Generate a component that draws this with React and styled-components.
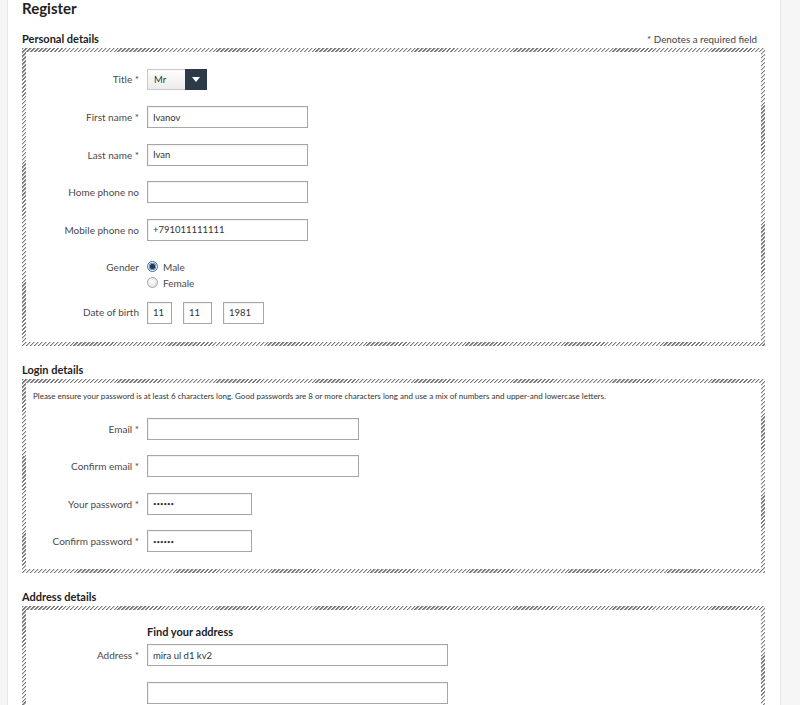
import styled, { createGlobalStyle } from "styled-components";

const GlobalStyle = createGlobalStyle`
  html, body {
    margin: 0;
    padding: 0;
    background: #fff;
    font-family: Lato, "Open Sans", sans-serif;
    color: #444;
    overflow: hidden;
  }
`;

const Page = styled.div`
  display: flex;
  width: 800px;
  height: 705px;
  overflow: hidden;
`;

const Rail = styled.div`
  flex: none;
  width: ${({ width }) => width}px;
  background: #f6f6f6;
  border-${({ side }) => (side === "left" ? "right" : "left")}: 1px solid #e8e8e8;
`;

const Main = styled.main`
  flex: 1;
  padding: 1px 15px 0 14px;
`;

const PageTitle = styled.h1`
  margin: 0;
  font-size: 15px;
  line-height: 15px;
  font-weight: 700;
  color: #222;
`;

const SectionHead = styled.div`
  display: flex;
  justify-content: space-between;
  align-items: baseline;
  height: 14px;
  margin-top: ${({ first }) => (first ? 16 : 17)}px;
  margin-bottom: 2px;

  h2 {
    margin: 0;
    font-size: 11px;
    line-height: 14px;
    font-weight: 700;
    color: #222;
  }

  span {
    font-size: 9.8px;
    color: #444;
    margin-right: 8px;
  }
`;

const Box = styled.div`
  border: 4px solid transparent;
  border-image: repeating-linear-gradient(
      135deg,
      #7e7e7e 0 1px,
      #c8c8c8 1px 1.6px,
      #fff 1.6px 2.8px
    )
    4;
  padding: ${({ pad }) => pad};
`;

const Note = styled.p`
  margin: 0 0 17px 7px;
  font-size: 8px;
  line-height: 10px;
  color: #333;
`;

const Row = styled.div`
  display: grid;
  grid-template-columns: 113px 1fr;
  column-gap: 8px;
  align-items: start;
  margin-top: ${({ gap }) => (gap === undefined ? 15.5 : gap)}px;

  &:first-of-type {
    margin-top: 0;
  }
`;

const Label = styled.label`
  text-align: right;
  font-size: 10px;
  line-height: ${({ lh }) => lh || 20}px;
  color: #4a4a4a;
  white-space: nowrap;
`;

const Input = styled.input`
  box-sizing: border-box;
  width: ${({ w }) => w}px;
  height: 22px;
  margin: 0;
  padding: 0 5px;
  border: 1px solid #a6a6a6;
  box-shadow: inset 1px 1px 1px rgba(0, 0, 0, 0.06);
  font-family: Lato, sans-serif;
  font-size: ${({ type }) => (type === "password" ? 6 : 9.5)}px;
  color: #333;
  background: #fff;
  outline: none;
`;

const DateGroup = styled.div`
  display: flex;
  gap: 11px;
`;

const Select = styled.div`
  display: flex;
  width: 60px;
  height: 21px;
  border: 1px solid #c9c9c9;
  box-sizing: border-box;

  span {
    flex: 1;
    padding-left: 6px;
    font-size: 9.5px;
    line-height: 19px;
    color: #333;
    background: linear-gradient(#fdfdfd, #ececec);
  }
`;

const Caret = styled.div`
  width: 22px;
  background: #2c3a47;
  display: flex;
  align-items: center;
  justify-content: center;
  margin: -1px -1px -1px 0;
`;

const RadioList = styled.div`
  display: flex;
  flex-direction: column;
`;

const RadioItem = styled.label`
  display: flex;
  align-items: center;
  gap: 5px;
  height: 16px;
  font-size: 10px;
  color: #4a4a4a;
`;

const RadioDot = styled.span`
  box-sizing: border-box;
  width: 11px;
  height: 11px;
  border-radius: 50%;
  border: 1px solid ${({ checked }) => (checked ? "#4f6f8a" : "#a8a8a8")};
  background: ${({ checked }) =>
    checked
      ? "radial-gradient(circle, #1f3c5a 0 2.2px, #6f9cc4 2.8px 3.6px, #e8eef4 4px)"
      : "radial-gradient(circle at 40% 35%, #fff, #dcdcdc)"};
`;

const SubHead = styled.h3`
  margin: 0 0 5px 121px;
  font-size: 11px;
  line-height: 14px;
  font-weight: 700;
  color: #222;
`;

function Field({ label, w, value = "", type = "text", gap }) {
  return (
    <Row gap={gap}>
      <Label lh={22}>{label}</Label>
      <Input w={w} type={type} defaultValue={value} readOnly />
    </Row>
  );
}

export default function App() {
  return (
    <>
      <GlobalStyle />
      <Page>
        <Rail width={7} side="left" />
        <Main>
          <PageTitle>Register</PageTitle>

          <SectionHead first>
            <h2>Personal details</h2>
            <span>* Denotes a required field</span>
          </SectionHead>
          <Box pad="17px 0 18px">
            <Row>
              <Label lh={21}>Title *</Label>
              <Select>
                <span>Mr</span>
                <Caret>
                  <svg width="8" height="5" viewBox="0 0 8 5">
                    <path d="M0 0h8L4 5z" fill="#fff" />
                  </svg>
                </Caret>
              </Select>
            </Row>
            <Field label="First name *" w={161} value="Ivanov" gap={16} />
            <Field label="Last name *" w={161} value="Ivan" />
            <Field label="Home phone no" w={161} />
            <Field label="Mobile phone no" w={161} value="+791011111111" />
            <Row gap={18}>
              <Label lh={16}>Gender</Label>
              <RadioList>
                <RadioItem>
                  <RadioDot checked />
                  Male
                </RadioItem>
                <RadioItem>
                  <RadioDot />
                  Female
                </RadioItem>
              </RadioList>
            </Row>
            <Row gap={11}>
              <Label lh={20}>Date of birth</Label>
              <DateGroup>
                <Input w={25} defaultValue="11" readOnly />
                <Input w={29} defaultValue="11" readOnly />
                <Input w={41} defaultValue="1981" readOnly />
              </DateGroup>
            </Row>
          </Box>

          <SectionHead>
            <h2>Login details</h2>
          </SectionHead>
          <Box pad="8px 0 17px">
            <Note>
              Please ensure your password is at least 6 characters long. Good
              passwords are 8 or more characters long and use a mix of numbers
              and upper-and lowercase letters.
            </Note>
            <div>
              <Field label="Email *" w={212} />
              <Field label="Confirm email *" w={212} />
              <Field label="Your password *" w={105} type="password" value="aaaaaa" />
              <Field label="Confirm password *" w={105} type="password" value="aaaaaa" />
            </div>
          </Box>

          <SectionHead>
            <h2>Address details</h2>
          </SectionHead>
          <Box pad="15px 0 16px">
            <SubHead>Find your address</SubHead>
            <div>
              <Field label="Address *" w={301} value="mira ul d1 kv2" />
              <Field label="" w={301} gap={16} />
            </div>
          </Box>
        </Main>
        <Rail width={19} side="right" />
      </Page>
    </>
  );
}
